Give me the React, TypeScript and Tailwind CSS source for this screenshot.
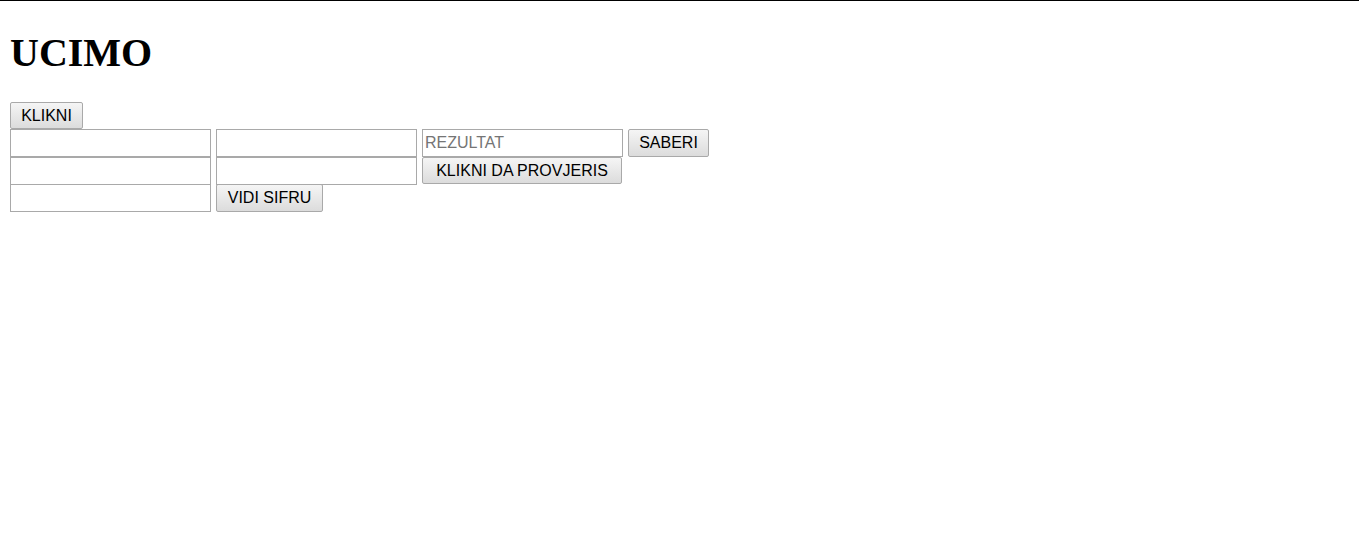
const btn =
  "h-[27px] px-[9px] border border-[#a9a9a9] rounded-[2px] bg-gradient-to-b from-[#f5f5f5] to-[#dcdcdc] text-[16px] leading-none text-black font-['Liberation_Sans',Arial,sans-serif]";
const field =
  "w-[201px] h-[28px] px-[2px] border border-[#a9a9a9] bg-white text-[16px] text-black placeholder:text-[#757575] outline-none font-['Liberation_Sans',Arial,sans-serif]";

export default function App() {
  return (
    <div className="min-h-[538px] bg-white border-t border-black font-['Liberation_Sans',Arial,sans-serif]">
      <div className="px-[10px]">
        <h1 className="mt-[32px] mb-[29px] text-[40px] leading-[40px] font-bold font-['Liberation_Serif','Times_New_Roman',serif]">
          UCIMO
        </h1>

        {/* Klik dugme */}
        <div className="flex">
          <button className={btn + " w-[73px]"}>KLIKNI</button>
        </div>

        {/* Sabiranje */}
        <div className="flex gap-[5px] h-[28px]">
          <input className={field} />
          <input className={field} />
          <input className={field} placeholder="REZULTAT" />
          <button className={btn + " w-[81px] h-[28px]"}>SABERI</button>
        </div>

        {/* Provjera */}
        <div className="flex gap-[5px] h-[28px]">
          <input className={field} />
          <input className={field} />
          <button className={btn + " w-[200px] h-[27px]"}>KLIKNI DA PROVJERIS</button>
        </div>

        {/* Sifra */}
        <div className="flex gap-[5px] h-[28px] -mt-px">
          <input className={field} />
          <button className={btn + " w-[107px] h-[28px]"}>VIDI SIFRU</button>
        </div>
      </div>
    </div>
  );
}
